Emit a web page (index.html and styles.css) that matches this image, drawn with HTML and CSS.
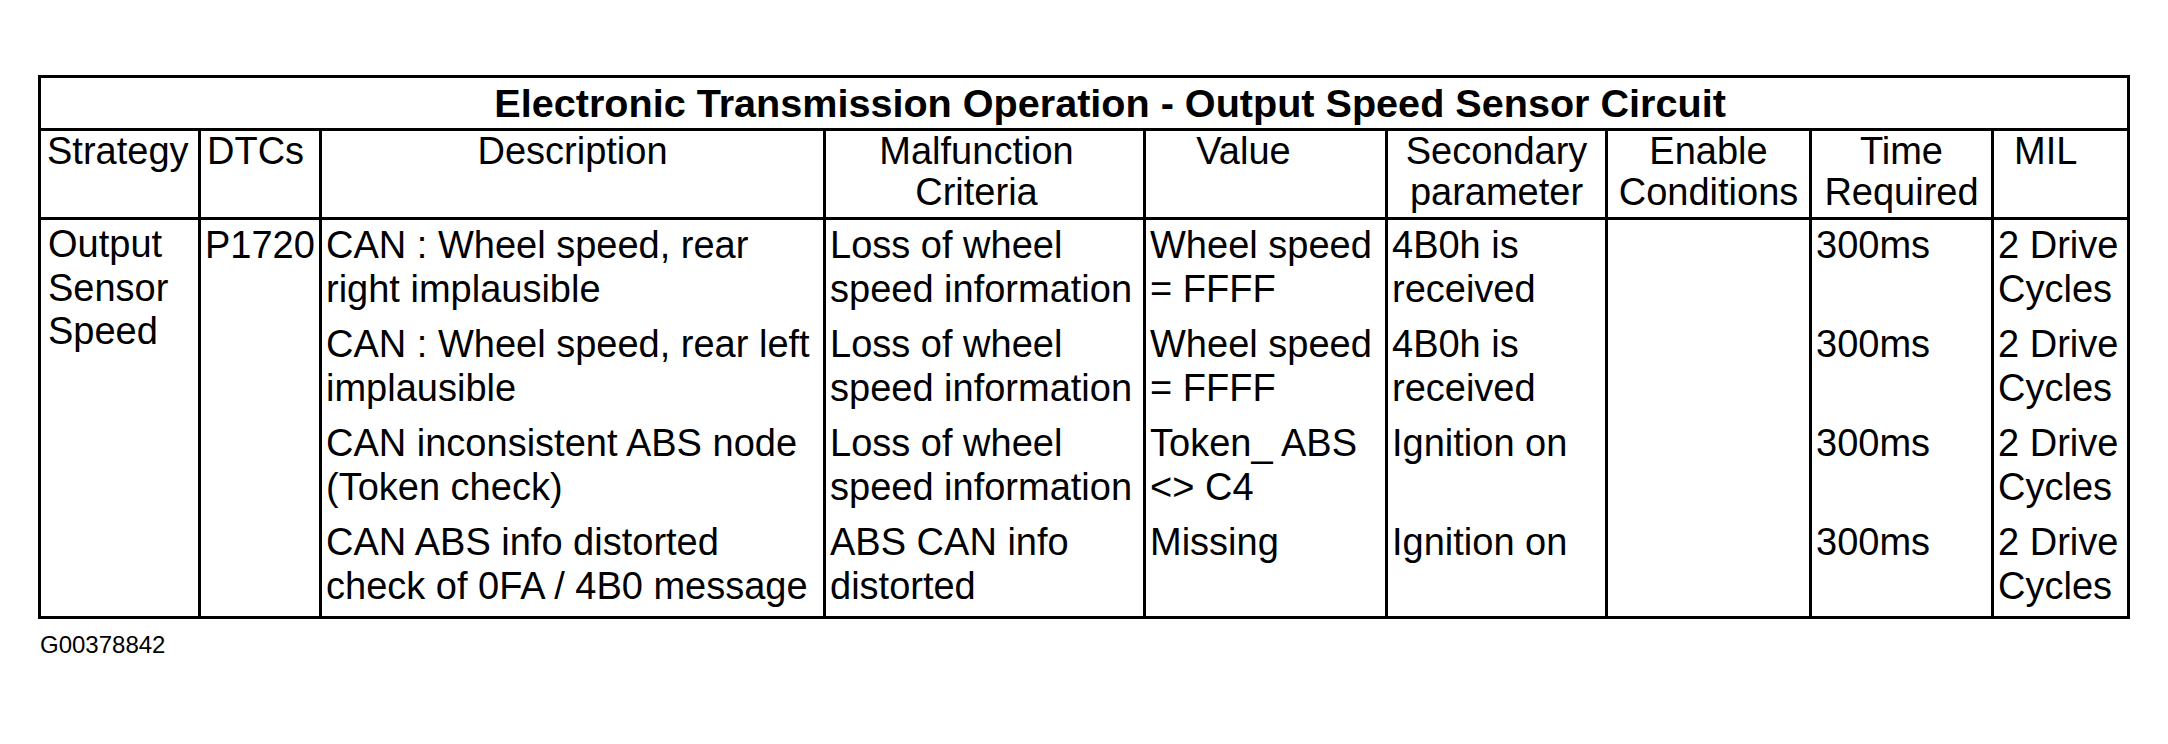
FILE: index.html
```html
<!DOCTYPE html>
<html>
<head>
<meta charset="utf-8">
<link rel="stylesheet" href="styles.css">
</head>
<body>
<div class="page">
  <table class="dtc">
    <colgroup>
      <col class="c-strategy">
      <col class="c-dtc">
      <col class="c-desc">
      <col class="c-malf">
      <col class="c-value">
      <col class="c-sec">
      <col class="c-enable">
      <col class="c-time">
      <col class="c-mil">
    </colgroup>
    <thead>
      <tr>
        <th class="title" colspan="9">Electronic Transmission Operation - Output Speed Sensor Circuit</th>
      </tr>
      <tr class="head">
        <th class="left">Strategy</th>
        <th class="left">DTCs</th>
        <th>Description</th>
        <th class="h-malf">Malfunction<br>Criteria</th>
        <th class="h-value">Value</th>
        <th>Secondary<br>parameter</th>
        <th>Enable<br>Conditions</th>
        <th>Time<br>Required</th>
        <th class="left h-mil">MIL</th>
      </tr>
    </thead>
    <tbody>
      <tr>
        <td class="strategy" rowspan="4">Output<br>Sensor<br>Speed</td>
        <td rowspan="4">P1720</td>
        <td>CAN : Wheel speed, rear<br>right implausible</td>
        <td>Loss of wheel<br>speed information</td>
        <td>Wheel speed<br>= FFFF</td>
        <td>4B0h is<br>received</td>
        <td rowspan="4"></td>
        <td>300ms</td>
        <td>2 Drive<br>Cycles</td>
      </tr>
      <tr>
        <td>CAN : Wheel speed, rear left<br>implausible</td>
        <td>Loss of wheel<br>speed information</td>
        <td>Wheel speed<br>= FFFF</td>
        <td>4B0h is<br>received</td>
        <td>300ms</td>
        <td>2 Drive<br>Cycles</td>
      </tr>
      <tr>
        <td>CAN inconsistent ABS node<br>(Token check)</td>
        <td>Loss of wheel<br>speed information</td>
        <td>Token_ ABS<br>&lt;&gt; C4</td>
        <td>Ignition on</td>
        <td>300ms</td>
        <td>2 Drive<br>Cycles</td>
      </tr>
      <tr>
        <td>CAN ABS info distorted<br>check of 0FA / 4B0 message</td>
        <td>ABS CAN info<br>distorted</td>
        <td>Missing</td>
        <td>Ignition on</td>
        <td>300ms</td>
        <td>2 Drive<br>Cycles</td>
      </tr>
    </tbody>
  </table>
  <div class="figure-id">G00378842</div>
</div>
</body>
</html>
```
FILE: styles.css
```css
html, body {
  margin: 0;
  padding: 0;
  background: #ffffff;
}

.page {
  padding: 75px 0 0 38px;
  font-family: "Liberation Sans", Arial, Helvetica, sans-serif;
  color: #000000;
}

.dtc {
  border-collapse: collapse;
  table-layout: fixed;
  width: 2092px;
  border: 3px solid #000;
  font-size: 38px;
}

.c-strategy { width: 160px; }
.c-dtc { width: 121px; }
.c-desc { width: 504px; }
.c-malf { width: 320px; }
.c-value { width: 242px; }
.c-sec { width: 220px; }
.c-enable { width: 204px; }
.c-time { width: 182px; }
.c-mil { width: 136px; }

.dtc th,
.dtc td {
  border: 3px solid #000;
  vertical-align: top;
  white-space: nowrap;
}

.dtc .title {
  font-weight: bold;
  font-size: 39.6px;
  line-height: 50px;
  height: 50px;
  padding: 0 0 0 52px;
  text-align: center;
  vertical-align: middle;
}

.head th {
  font-weight: normal;
  line-height: 41px;
  height: 86px;
  padding: 0 2px;
  text-align: center;
}

.head th.left {
  text-align: left;
  padding-left: 6px;
}

.head th.h-malf {
  padding-right: 18px;
}

.head th.h-value {
  padding-right: 46px;
}

.head th.h-mil {
  padding-left: 20px;
}

.dtc tbody td {
  border-top: none;
  border-bottom: none;
  line-height: 44px;
  padding: 3px 2px 8px 4px;
  text-align: left;
}

.dtc tbody td.strategy {
  line-height: 43.5px;
  padding-left: 7px;
}

.figure-id {
  font-size: 24px;
  line-height: 28px;
  margin-top: 12px;
  padding-left: 2px;
}
```
